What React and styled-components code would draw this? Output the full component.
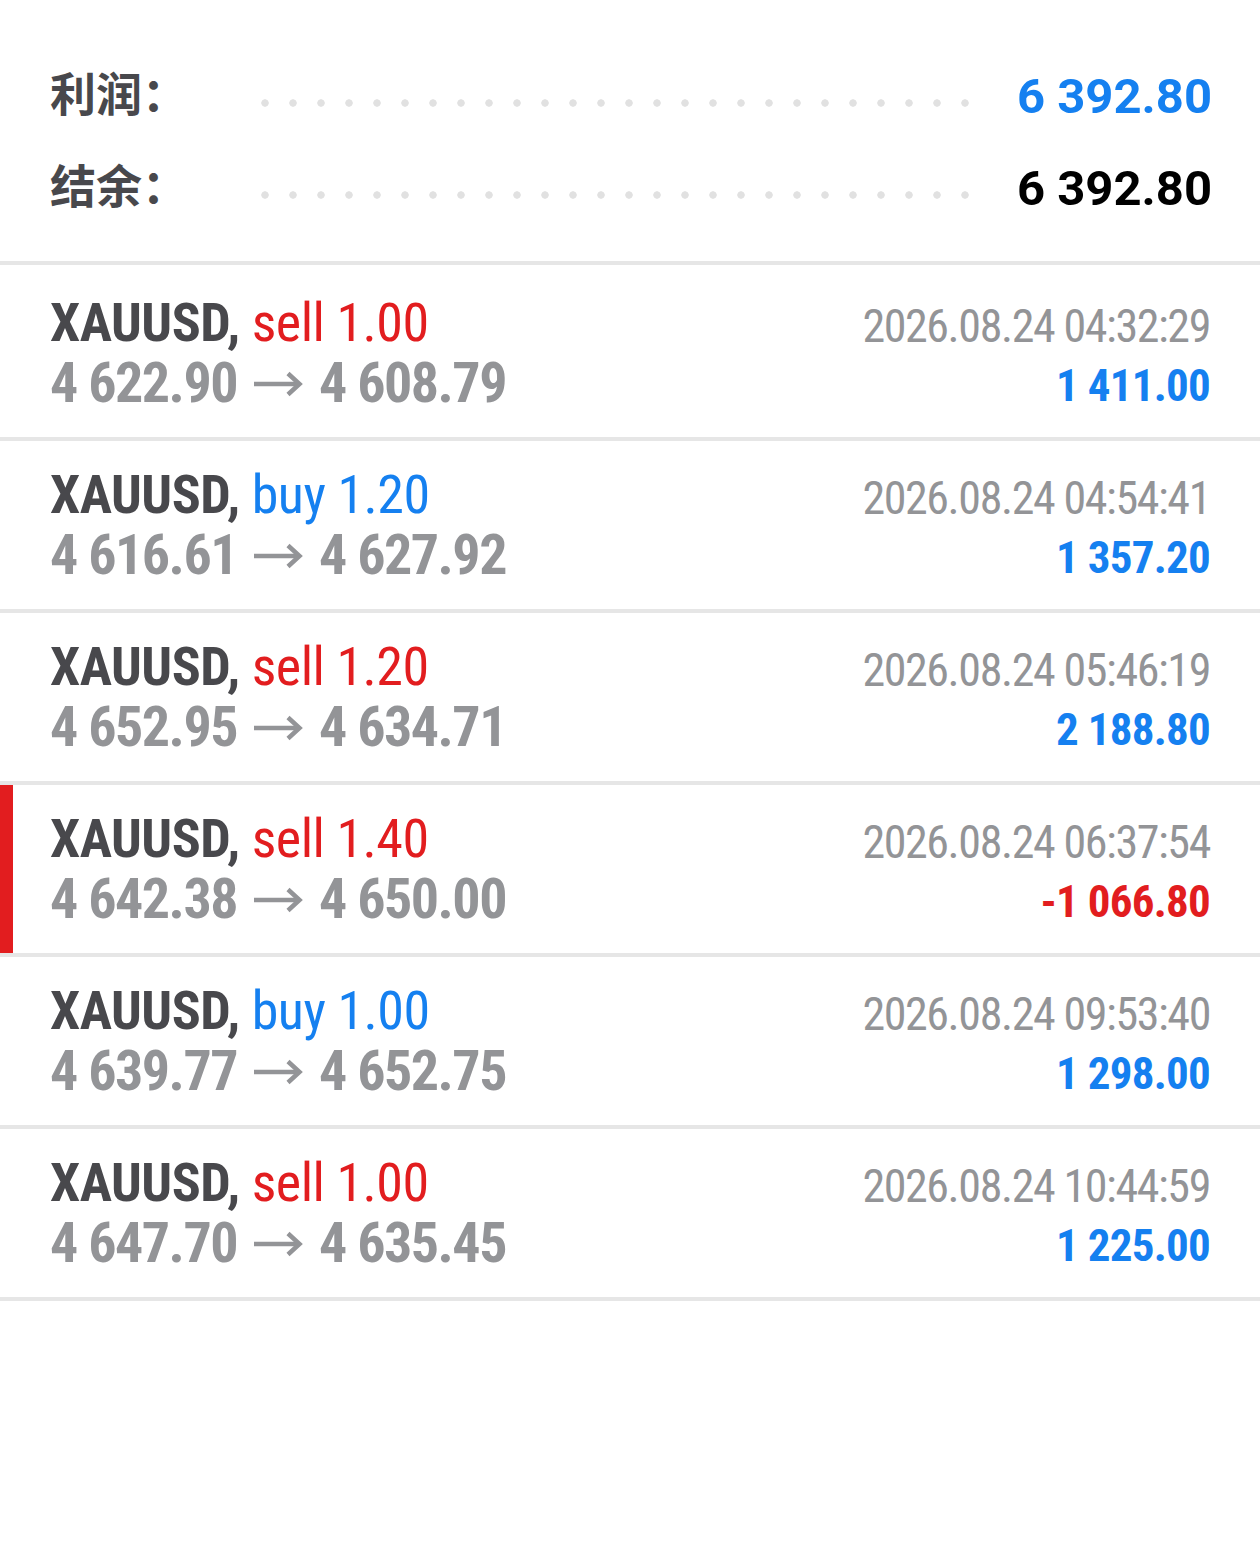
import React from 'react';
import styled, { createGlobalStyle } from 'styled-components';

const GlobalStyle = createGlobalStyle`
  body {
    margin: 0;
    background: #fff;
    font-family: Roboto, "Noto Sans CJK SC", sans-serif;
  }
`

const Page = styled.div`
  width: 1260px;
  min-height: 1566px;
  background: #fff;
`

const Summary = styled.div`
  padding: 50px 48px 27px 50px;
  border-bottom: 4px solid #e6e6e6;
`

const SummaryRow = styled.div`
  display: flex;
  align-items: center;
  height: 92px;
`

const Label = styled.div`
  width: 201px;
  margin-top: -10px;
  font-family: "Noto Sans CJK SC", sans-serif;
  font-weight: 700;
  font-size: 46px;
  color: #48484c;
`

const Dots = styled.div`
  width: 728px;
  height: 8px;
  margin-top: 14px;
  background-image: radial-gradient(circle, #e1e1e1 3.4px, transparent 4px);
  background-size: 28px 8px;
`

const Value = styled.div`
  margin-left: auto;
  font-family: Roboto, sans-serif;
  font-weight: 700;
  font-size: 49px;
  color: ${p => p.$color};
`

const List = styled.div`
  padding-top: 4px;
`

const Trade = styled.div`
  display: flex;
  justify-content: space-between;
  height: 172px;
  box-sizing: border-box;
  padding: 24px 50px 0;
  border-bottom: 4px solid #e6e6e6;
  position: relative;
  font-family: Roboto, sans-serif;
  font-stretch: 75%;

  &::before {
    content: '';
    display: ${p => (p.$marked ? 'block' : 'none')};
    position: absolute;
    left: 0;
    top: 0;
    bottom: 0;
    width: 13px;
    background: #e21d1f;
  }
`

const Left = styled.div`
  display: flex;
  flex-direction: column;
`

const Right = styled.div`
  display: flex;
  flex-direction: column;
  align-items: flex-end;
  padding-top: 3px;
`

const Line = styled.div`
  line-height: 60px;
  font-size: 54px;
  letter-spacing: -0.5px;
  white-space: pre;
`

const Symbol = styled.span`
  font-weight: 700;
  color: #48484c;
`

const Side = styled.span`
  color: ${p => (p.$buy ? '#1580f0' : '#e21d1f')};
`

const Prices = styled.div`
  display: flex;
  align-items: center;
  line-height: 60px;
  font-size: 56px;
  font-weight: 700;
  letter-spacing: -1.5px;
  color: #939497;
  white-space: pre;
`

const Arrow = styled.svg`
  width: 50px;
  height: 26px;
  margin: 2px 16px 0 16px;
  flex: none;
`

const Time = styled.div`
  line-height: 60px;
  font-size: 46px;
  letter-spacing: -1.4px;
  color: #939497;
`

const Profit = styled.div`
  line-height: 60px;
  font-size: 45px;
  font-weight: 700;
  letter-spacing: -0.75px;
  color: ${p => (p.$loss ? '#e21d1f' : '#1580f0')};
`

const trades = [
  { side: 'sell', vol: '1.00', open: '4 622.90', close: '4 608.79', time: '2026.08.24 04:32:29', profit: '1 411.00' },
  { side: 'buy', vol: '1.20', open: '4 616.61', close: '4 627.92', time: '2026.08.24 04:54:41', profit: '1 357.20' },
  { side: 'sell', vol: '1.20', open: '4 652.95', close: '4 634.71', time: '2026.08.24 05:46:19', profit: '2 188.80' },
  { side: 'sell', vol: '1.40', open: '4 642.38', close: '4 650.00', time: '2026.08.24 06:37:54', profit: '-1 066.80', loss: true },
  { side: 'buy', vol: '1.00', open: '4 639.77', close: '4 652.75', time: '2026.08.24 09:53:40', profit: '1 298.00' },
  { side: 'sell', vol: '1.00', open: '4 647.70', close: '4 635.45', time: '2026.08.24 10:44:59', profit: '1 225.00' },
];

function ArrowIcon() {
  return (
    <Arrow viewBox="0 0 50 26" fill="none" stroke="#939497" strokeWidth="4.5">
      <path d="M1 13H46" />
      <path d="M35 2.5L46.5 13L35 23.5" />
    </Arrow>
  );
}

export default function App() {
  return (
    <Page>
      <GlobalStyle />
      <Summary>
        <SummaryRow>
          <Label>利润：</Label>
          <Dots />
          <Value $color="#1580f0">6 392.80</Value>
        </SummaryRow>
        <SummaryRow>
          <Label>结余：</Label>
          <Dots />
          <Value $color="#000">6 392.80</Value>
        </SummaryRow>
      </Summary>
      <List>
        {trades.map((t, i) => (
          <Trade key={i} $marked={t.loss}>
            <Left>
              <Line>
                <Symbol>XAUUSD,</Symbol> <Side $buy={t.side === 'buy'}>{t.side} {t.vol}</Side>
              </Line>
              <Prices>
                <span>{t.open}</span>
                <ArrowIcon />
                <span>{t.close}</span>
              </Prices>
            </Left>
            <Right>
              <Time>{t.time}</Time>
              <Profit $loss={t.loss}>{t.profit}</Profit>
            </Right>
          </Trade>
        ))}
      </List>
    </Page>
  );
}
